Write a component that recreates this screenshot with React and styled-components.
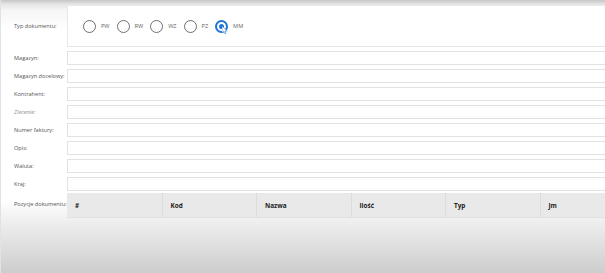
import { Fragment } from "react";
import styled, { createGlobalStyle } from "styled-components";

const GlobalStyle = createGlobalStyle`
  html, body {
    margin: 0;
    padding: 0;
  }
  body {
    font-family: "Open Sans", "Noto Sans", sans-serif;
    color: #333;
  }
`;

const Page = styled.div`
  width: 605px;
  height: 273px;
  overflow: hidden;
  box-sizing: border-box;
  padding: 5px 0 0 13px;
  background: linear-gradient(
    to bottom,
    #c6c6c6 0px,
    #e4e4e4 4px,
    #f5f5f5 10px,
    #ffffff 30px,
    #ffffff 200px,
    #ececec 225px,
    #cdcdcd 273px
  );
  border-left: 1px solid #e2e2e2;
`;

const Form = styled.div`
  display: grid;
  grid-template-columns: 53px 1fr;
  row-gap: 4px;
`;

const Label = styled.div`
  font-size: 5.6px;
  color: ${(p) => (p.$muted ? "#8a8a8a" : "#555")};
  font-style: ${(p) => (p.$muted ? "italic" : "normal")};
  white-space: nowrap;
  display: flex;
  align-items: ${(p) => (p.$top ? "flex-start" : "center")};
  padding-top: ${(p) => (p.$top ? "5px" : "0")};
`;

const RadioPanel = styled.div`
  height: 42px;
  box-sizing: border-box;
  border: 1px solid #e8e8e8;
  border-right: none;
  background: #fff;
  display: flex;
  align-items: center;
  padding-left: 15px;
  gap: 7px;
`;

const RadioItem = styled.label`
  display: flex;
  align-items: center;
  gap: 5px;
  font-size: 5.6px;
  color: #666;
`;

const Circle = styled.span`
  width: 13px;
  height: 13px;
  box-sizing: border-box;
  border-radius: 50%;
  border: ${(p) => (p.$checked ? "2px solid #1f74d6" : "1.5px solid #6e6e6e")};
  background: #fff;
  display: flex;
  align-items: center;
  justify-content: center;
  position: relative;
  &::after {
    content: "";
    display: ${(p) => (p.$checked ? "block" : "none")};
    width: 5px;
    height: 5px;
    border-radius: 50%;
    background: #1f74d6;
  }
`;

const Cursor = styled.svg`
  position: absolute;
  left: 5px;
  top: 4px;
`;

const Input = styled.div`
  height: 14px;
  box-sizing: border-box;
  border: 1px solid #e2e2e2;
  border-right: none;
  background: #fff;
`;

const Table = styled.div`
  margin-top: -2px;
  width: 570px;
  height: 24px;
  display: grid;
  grid-template-columns: repeat(6, 94.5px);
  background: #e9e9e9;
  border-bottom: 1px solid #e0e0e0;
`;

const HeadCell = styled.div`
  display: flex;
  align-items: center;
  padding-left: 8px;
  font-size: 6.4px;
  font-weight: 700;
  color: #222;
  border-left: ${(p) => (p.$first ? "none" : "1px solid #dcdcdc")};
`;

const types = ["PW", "RW", "WZ", "PZ", "MM"];
const fields = [
  "Magazyn:",
  "Magazyn docelowy:",
  "Kontrahent:",
  "Zlecenie:",
  "Numer faktury:",
  "Opis:",
  "Waluta:",
  "Kraj:",
];
const columns = ["#", "Kod", "Nazwa", "Ilość", "Typ", "Jm"];

export default function App() {
  return (
    <>
      <GlobalStyle />
      <Page>
        <Form>
          <Label>Typ dokumentu:</Label>
          <RadioPanel>
            {types.map((t) => (
              <RadioItem key={t}>
                <Circle $checked={t === "MM"}>
                  {t === "MM" && (
                    <Cursor width="6" height="8" viewBox="0 0 6 8">
                      <path d="M0 0 L0 7 L1.8 5.4 L3 8 L4 7.5 L2.9 5 L5.2 5 Z" fill="#fff" stroke="#1f74d6" strokeWidth="0.5" />
                    </Cursor>
                  )}
                </Circle>
                {t}
              </RadioItem>
            ))}
          </RadioPanel>
          {fields.map((f) => (
            <Fragment key={f}>
              <Label $muted={f === "Zlecenie:"}>{f}</Label>
              <Input />
            </Fragment>
          ))}
          <Label $top>Pozycje dokumentu:</Label>
          <Table>
            {columns.map((c, i) => (
              <HeadCell key={c} $first={i === 0}>{c}</HeadCell>
            ))}
          </Table>
        </Form>
      </Page>
    </>
  );
}
